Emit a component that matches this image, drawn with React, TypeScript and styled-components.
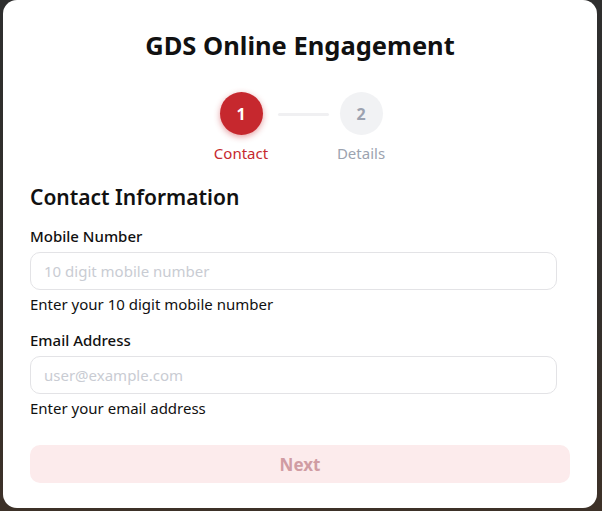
import React, { useState } from 'react'
import styled, { createGlobalStyle } from 'styled-components'

const GlobalStyle = createGlobalStyle`
  html, body {
    margin: 0;
    padding: 0;
    height: 100%;
  }
  body {
    font-family: 'Noto Sans', 'Open Sans', Arial, sans-serif;
    background: linear-gradient(180deg, #2e2e2e 0%, #332f2b 60%, #3d3128 100%);
  }
`

const Backdrop = styled.div`
  padding: 0 5px 0 3px;
  height: 511px;
  box-sizing: border-box;
`

const Card = styled.div`
  background: #ffffff;
  border-radius: 14px;
  height: 508px;
  box-sizing: border-box;
  padding: 29px 27px 24px 27px;
  display: flex;
  flex-direction: column;
`

const Title = styled.h1`
  margin: 0;
  text-align: center;
  font-size: 25.5px;
  line-height: 32px;
  font-weight: 700;
  color: #111111;
`

const Stepper = styled.div`
  margin-top: 31px;
  padding-left: 2px;
  display: flex;
  justify-content: center;
  align-items: flex-start;
`

const Step = styled.div`
  display: flex;
  flex-direction: column;
  align-items: center;
  width: 60px;
`

const Circle = styled.div<{ $active?: boolean }>`
  width: 43px;
  height: 43px;
  border-radius: 50%;
  display: flex;
  align-items: center;
  justify-content: center;
  font-size: 16px;
  font-weight: 700;
  background: ${p => (p.$active ? '#c6282e' : '#f1f2f4')};
  color: ${p => (p.$active ? '#ffffff' : '#9ca2b0')};
  box-shadow: ${p => (p.$active ? '0 2px 6px rgba(198, 40, 46, 0.45)' : 'none')};
`

const StepLabel = styled.div<{ $active?: boolean }>`
  margin-top: 8px;
  font-size: 15px;
  line-height: 20px;
  color: ${p => (p.$active ? '#c6282e' : '#9ca3af')};
  white-space: nowrap;
`

const Connector = styled.div`
  width: 51px;
  height: 3px;
  background: #f0f0f2;
  margin: 21px 2px 0 7px;
  border-radius: 2px;
`

const SectionTitle = styled.h2`
  margin: 20px 0 0 0;
  font-size: 21px;
  line-height: 28px;
  font-weight: 600;
  color: #111111;
`

const Field = styled.div`
  display: flex;
  flex-direction: column;
  margin-top: 14px;
`

const Label = styled.label`
  font-size: 15px;
  line-height: 22px;
  font-weight: 500;
  color: #111111;
`

const Input = styled.input`
  margin-top: 5px;
  width: 527px;
  height: 38px;
  box-sizing: border-box;
  border: 1px solid #e3e3e6;
  border-radius: 10px;
  padding: 0 13px;
  font-family: inherit;
  font-size: 15px;
  color: #111111;
  outline: none;
  &::placeholder {
    color: #c9ccd3;
  }
`

const Helper = styled.div`
  margin-top: 3px;
  font-size: 15px;
  line-height: 22px;
  color: #111111;
`

const NextButton = styled.button`
  margin-top: 26px;
  width: 100%;
  height: 38px;
  border: none;
  border-radius: 10px;
  background: #fcebec;
  color: #d09ca3;
  font-family: inherit;
  font-size: 17px;
  font-weight: 700;
  cursor: not-allowed;
`

export default function App() {
  const [mobile, setMobile] = useState('')
  const [email, setEmail] = useState('')

  return (
    <>
      <GlobalStyle />
      <Backdrop>
        <Card>
          <Title>GDS Online Engagement</Title>
          <Stepper>
            <Step>
              <Circle $active>1</Circle>
              <StepLabel $active>Contact</StepLabel>
            </Step>
            <Connector />
            <Step>
              <Circle>2</Circle>
              <StepLabel>Details</StepLabel>
            </Step>
          </Stepper>
          <SectionTitle>Contact Information</SectionTitle>
          <Field>
            <Label>Mobile Number</Label>
            <Input
              placeholder="10 digit mobile number"
              value={mobile}
              onChange={e => setMobile(e.target.value)}
            />
            <Helper>Enter your 10 digit mobile number</Helper>
          </Field>
          <Field>
            <Label>Email Address</Label>
            <Input
              placeholder="user@example.com"
              value={email}
              onChange={e => setEmail(e.target.value)}
            />
            <Helper>Enter your email address</Helper>
          </Field>
          <NextButton disabled>Next</NextButton>
        </Card>
      </Backdrop>
    </>
  )
}
